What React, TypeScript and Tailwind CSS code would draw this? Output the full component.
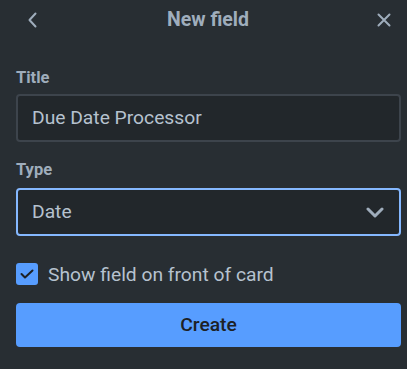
import React from "react";

export default function App() {
  return (
    <div
      className="w-[407px] h-[369px] bg-[#282e33] text-[#b6c2cf] overflow-hidden"
      style={{ fontFamily: "Roboto, 'Liberation Sans', sans-serif" }}
    >
      <div className="h-[40px] flex items-center pl-[24px] pr-[15px]">
        <button className="w-[16px] h-[16px] flex items-center justify-center">
          <svg width="10" height="16" viewBox="0 0 10 16" fill="none">
            <path d="M8.5 1.5 L2.5 8 L8.5 14.5" stroke="#9fadbc" strokeWidth="2" strokeLinecap="round" strokeLinejoin="round" />
          </svg>
        </button>
        <div className="flex-1 text-center text-[19.5px] leading-[24px] font-bold text-[#9fadbc]">New field</div>
        <button className="w-[16px] h-[16px] flex items-center justify-center">
          <svg width="14" height="14" viewBox="0 0 14 14" fill="none">
            <path d="M1.5 1.5 L12.5 12.5 M12.5 1.5 L1.5 12.5" stroke="#9fadbc" strokeWidth="2" strokeLinecap="round" />
          </svg>
        </button>
      </div>
      <div className="pl-[16px] pr-[6px] flex flex-col">
        <label className="mt-[28px] text-[16.5px] leading-[20px] font-bold text-[#9fadbc]">Title</label>
        <div className="mt-[6px] h-[48px] rounded-[4px] border-2 border-[#3d444c] bg-[#22272b] flex items-center px-[14px] text-[19.25px]">
          Due Date Processor
        </div>
        <label className="mt-[18px] text-[16.5px] leading-[20px] font-bold text-[#9fadbc]">Type</label>
        <div className="mt-[8px] h-[48px] rounded-[4px] border-2 border-[#85b8ff] bg-[#22272b] flex items-center justify-between pl-[14px] pr-[15px] text-[19.25px]">
          <span>Date</span>
          <svg width="18" height="11" viewBox="0 0 18 11" fill="none">
            <path d="M2 2 L9 9 L16 2" stroke="#9fadbc" strokeWidth="3" strokeLinecap="round" strokeLinejoin="round" />
          </svg>
        </div>
        <div className="mt-[27px] h-[22px] flex items-center gap-[10px]">
          <div className="w-[22px] h-[22px] rounded-[3px] bg-[#579dff] flex items-center justify-center">
            <svg width="14" height="10" viewBox="0 0 14 10" fill="none">
              <path d="M1.5 5 L5 8.5 L12.5 1.5" stroke="#1d2125" strokeWidth="2" strokeLinecap="round" strokeLinejoin="round" />
            </svg>
          </div>
          <span className="text-[19.25px] leading-[22px] pt-[2px]">Show field on front of card</span>
        </div>
        <button className="mt-[18px] h-[44px] rounded-[4px] bg-[#579dff] text-[#1d2125] text-[19.25px] font-medium flex items-center justify-center">
          Create
        </button>
      </div>
    </div>
  );
}
